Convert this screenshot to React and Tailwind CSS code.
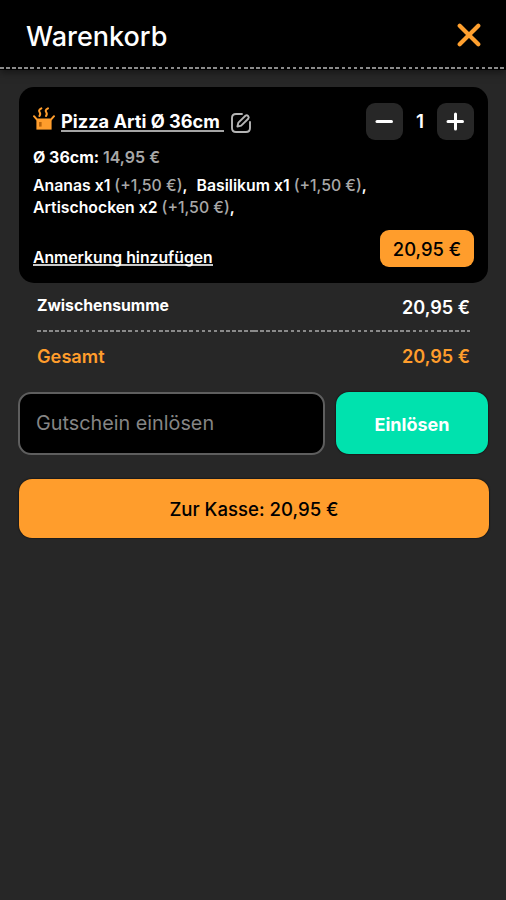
const extras = [
  { name: 'Ananas', qty: 1, price: '+1,50 €' },
  { name: 'Basilikum', qty: 1, price: '+1,50 €' },
  { name: 'Artischocken', qty: 2, price: '+1,50 €' },
];

function CloseIcon() {
  return (
    <svg width="26" height="26" viewBox="0 0 26 26" fill="none" stroke="#ffa02f" strokeWidth="4.2" strokeLinecap="round">
      <path d="M3.7 2.7 22.3 21.3M22.3 2.7 3.7 21.3" />
    </svg>
  );
}

function HotBoxIcon() {
  return (
    <svg width="22" height="24" viewBox="0 0 22 24" fill="none" stroke="#ff9d2c" strokeLinecap="round" strokeLinejoin="round">
      <path d="M8.4 1.4C2.8 4.4 9.6 5.6 6.4 9M15 1.4C9.4 4.4 16.2 5.6 13 9" strokeWidth="2" />
      <path d="M1 9.2 3.8 12.4H18.2L21 9.2" strokeWidth="2" />
      <path d="M3.4 12H18.6V22.6H3.4Z" fill="#ff9d2c" stroke="none" />
      <path d="M6 15H8.6V19.6H6Z" fill="#b8640c" stroke="none" />
    </svg>
  );
}

function EditIcon() {
  return (
    <svg width="22" height="22" viewBox="0 0 22 22" fill="none" stroke="#b5b5b5" strokeWidth="1.9" strokeLinecap="round" strokeLinejoin="round">
      <path d="M12 2H6Q2 2 2 6V16Q2 20 6 20H16Q20 20 20 16V10" />
      <path d="M7.4 14.6 8.4 10.6 15.4 3.8C17.2 2.4 19.8 4.8 18.2 6.8L11.2 13.6Z" />
    </svg>
  );
}

function Dashes({ className = '' }) {
  return (
    <span
      className={`block h-[2px] bg-[repeating-linear-gradient(90deg,#8a8a8a_0,#8a8a8a_3.6px,transparent_3.6px,transparent_6.1px)] ${className}`}
    />
  );
}

export default function App() {
  return (
    <div className="flex h-[900px] w-[506px] flex-col overflow-hidden bg-[#272727] font-['Inter',sans-serif] text-white">
      {/* Header */}
      <header className="h-[70px] shrink-0 bg-black shadow-[0_2px_8px_rgba(0,0,0,0.5)]">
        <div className="flex h-[67px] items-center justify-between pt-[5px] pr-[24px] pl-[26px]">
          <h1 className="pt-[2px] text-[27px] font-medium">Warenkorb</h1>
          <button aria-label="Schließen">
            <CloseIcon />
          </button>
        </div>
        <Dashes />
      </header>

      {/* Item */}
      <section className="mt-[17px] mr-[18px] ml-[19px] flex h-[196px] shrink-0 flex-col rounded-[15px] bg-black px-[14px]">
        <div className="flex h-[56px] items-center pt-[12px]">
          <div className="flex flex-1 items-center">
            <span className="-mt-[5px]">
              <HotBoxIcon />
            </span>
            <span className="mt-[2px] ml-[6px] border-b-2 border-[#a5a5a5] pr-[4px] text-[18.2px] leading-[18px] font-bold">
              Pizza Arti Ø 36cm
            </span>
            <span className="ml-[6px] pt-[3px]">
              <EditIcon />
            </span>
          </div>
          <button className="flex size-[37px] items-center justify-center rounded-[9px] bg-[#272727]">
            <svg width="20" height="20" viewBox="0 0 20 20" stroke="#fff" strokeWidth="3" strokeLinecap="round">
              <path d="M2 10.5H16.5" />
            </svg>
          </button>
          <span className="w-[34px] pt-[2px] text-center text-[19px] font-semibold">1</span>
          <button className="flex size-[37px] items-center justify-center rounded-[9px] bg-[#272727]">
            <svg width="20" height="20" viewBox="0 0 20 20" stroke="#fff" strokeWidth="3" strokeLinecap="round">
              <path d="M2 10.5H16.5M9.5 3V18" />
            </svg>
          </button>
        </div>

        <p className="mt-[3px] text-[16px] leading-[22px] font-bold">
          Ø 36cm: <span className="font-semibold text-[#a8a8a8]">14,95 €</span>
        </p>
        <p className="mt-[7px] w-[370px] text-[15.8px] leading-[22px] font-semibold">
          {extras.map((extra) => (
            <span key={extra.name} className="mr-[9px] inline-block">
              {extra.name} x{extra.qty} <span className="font-medium text-[#a8a8a8]">({extra.price})</span>,
            </span>
          ))}
        </p>

        <div className="mt-[11px] flex h-[37px] items-end justify-between">
          <span className="mb-[1px] border-b-2 border-[#c8c8c8] text-[15.75px] leading-[13px] font-semibold">
            Anmerkung hinzufügen
          </span>
          <span className="flex h-[37px] w-[94px] items-center justify-center rounded-[9px] bg-[#ff9d2c] pt-[2px] text-[18.4px] font-medium text-black">
            20,95 €
          </span>
        </div>
      </section>

      {/* Totals */}
      <section className="mr-[36px] ml-[37px] shrink-0">
        <div className="flex h-[47px] items-center justify-between">
          <span className="-mt-[1px] text-[15.75px] font-bold">Zwischensumme</span>
          <span className="pt-[2px] text-[18.1px] font-semibold">20,95 €</span>
        </div>
        <div className="flex">
          <Dashes className="flex-1" />
          <Dashes className="flex-1" />
        </div>
        <div className="flex h-[48px] items-center justify-between pt-[2px] text-[#ff9d2c]">
          <span className="text-[18.2px] font-semibold">Gesamt</span>
          <span className="text-[18.1px] font-semibold">20,95 €</span>
        </div>
      </section>

      {/* Voucher */}
      <section className="mt-[12px] mr-[18px] ml-[18px] flex shrink-0 gap-[11px]">
        <input
          className="h-[63px] w-[307px] rounded-[13px] border-2 border-[#5e5e5e] bg-black px-[16px] pb-[2px] text-[19.8px] outline-none placeholder:text-[#858585]"
          placeholder="Gutschein einlösen"
        />
        <button className="h-[62px] flex-1 rounded-[13px] bg-[#00e2ae] pt-[3px] text-[18px] font-bold shadow-[0_0_2px_#000]">
          Einlösen
        </button>
      </section>

      {/* Checkout */}
      <button className="mt-[24px] mr-[17px] ml-[19px] h-[59px] shrink-0 rounded-[13px] bg-[#ff9d2c] pt-[2px] text-[18.6px] font-medium text-black shadow-[0_0_2px_#000]">
        Zur Kasse: 20,95 €
      </button>
    </div>
  );
}
